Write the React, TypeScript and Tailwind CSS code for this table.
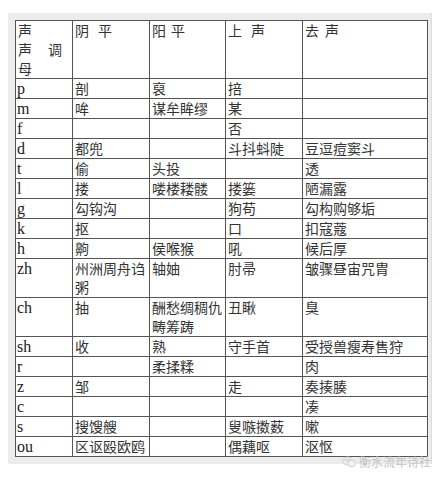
const rows: [string, string, string, string, string][] = [
  ["p", "剖", "裒", "掊", ""],
  ["m", "哞", "谋牟眸缪", "某", ""],
  ["f", "", "", "否", ""],
  ["d", "都兜", "", "斗抖蚪陡", "豆逗痘窦斗"],
  ["t", "偷", "头投", "", "透"],
  ["l", "搂", "喽楼耧髅", "搂篓", "陋漏露"],
  ["g", "勾钩沟", "", "狗苟", "勾构购够垢"],
  ["k", "抠", "", "口", "扣寇蔻"],
  ["h", "齁", "侯喉猴", "吼", "候后厚"],
  ["zh", "州洲周舟诌粥", "轴妯", "肘帚", "皱骤昼宙咒胄"],
  ["ch", "抽", "酬愁绸稠仇畴筹踌", "丑瞅", "臭"],
  ["sh", "收", "熟", "守手首", "受授兽瘦寿售狩"],
  ["r", "", "柔揉糅", "", "肉"],
  ["z", "邹", "", "走", "奏揍腠"],
  ["c", "", "", "", "凑"],
  ["s", "搜馊艘", "", "叟嗾擞薮", "嗽"],
  ["ou", "区讴殴欧鸥", "", "偶藕呕", "沤怄"],
];

const cell = "border border-[#555] px-[2px] py-0 align-top";

export default function App() {
  return (
    <div className="w-[438px] h-[480px] bg-white pt-[13px] pl-[8px] font-['Liberation_Serif','Noto_Sans_CJK_SC',serif] relative">
      <div className="w-[424px] bg-[#ececec] pt-[7px] pb-[7px] pl-[7px] pr-[5px] border-r border-[#dcdcdc]">
        <table className="table-fixed border-collapse w-[412px] bg-white text-[#333] leading-[19px]">
          <colgroup>
            <col className="w-[57px]" />
            <col className="w-[77px]" />
            <col className="w-[76px]" />
            <col className="w-[77px]" />
            <col className="w-[125px]" />
          </colgroup>
          <thead>
            <tr className="text-[14px] font-['Noto_Sans_CJK_SC',sans-serif] font-normal">
              <th className={`${cell} text-left font-normal`}>
                <div>声</div>
                <div className="flex justify-between pr-[8px]">
                  <span>声</span>
                  <span>调</span>
                </div>
                <div>母</div>
              </th>
              <th className={`${cell} text-left font-normal`}>
                <span className="tracking-[9px]">阴平</span>
              </th>
              <th className={`${cell} text-left font-normal`}>
                <span className="tracking-[5px]">阳平</span>
              </th>
              <th className={`${cell} text-left font-normal`}>
                <span className="tracking-[9px]">上声</span>
              </th>
              <th className={`${cell} text-left font-normal`}>
                <span className="tracking-[6px]">去声</span>
              </th>
            </tr>
          </thead>
          <tbody>
            {rows.map((r) => (
              <tr key={r[0]}>
                <td className={`${cell} text-[16px] text-[#222] pl-[1px]`}>{r[0]}</td>
                {r.slice(1).map((c, i) => (
                  <td key={i} className={`${cell} text-[14px] font-['Noto_Sans_CJK_SC',sans-serif]`}>
                    {c}
                  </td>
                ))}
              </tr>
            ))}
          </tbody>
        </table>
      </div>
      <div className="absolute left-[342px] top-[453px] flex items-center gap-[3px] text-[#c4c4c4] text-[12px] font-['Noto_Sans_CJK_SC',sans-serif]">
        <svg width="14" height="12" viewBox="0 0 14 12" fill="none" stroke="#cfcfcf" strokeWidth="1">
          <ellipse cx="5.5" cy="5" rx="4.8" ry="4" />
          <ellipse cx="9.5" cy="7.5" rx="3.8" ry="3.2" fill="#f4f4f4" />
          <circle cx="4" cy="4" r="0.6" fill="#cfcfcf" />
          <circle cx="7" cy="4" r="0.6" fill="#cfcfcf" />
        </svg>
        <span>衡水流年诗社</span>
      </div>
    </div>
  );
}
